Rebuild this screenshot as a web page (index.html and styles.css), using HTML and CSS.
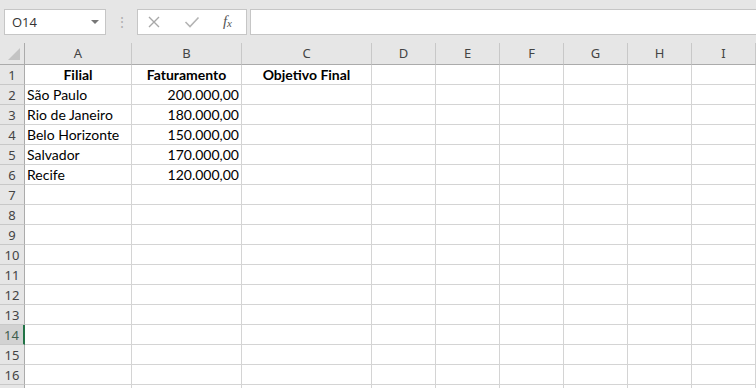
FILE: index.html
```html
<!DOCTYPE html>
<html lang="pt">
<head>
    <meta charset="UTF-8">
    <title>Planilha</title>
    <link rel="stylesheet" href="styles.css">
</head>
<body>
    <div class="topbar">
        <div class="namebox">
            <span>O14</span>
            <span class="arrow"></span>
        </div>
        <div class="dots">⋮</div>
        <div class="fxbox">
            <svg width="14" height="14" viewBox="0 0 14 14"><path d="M2 2 L12 12 M12 2 L2 12" stroke="#a8a8a8" stroke-width="1.4" fill="none"/></svg>
            <svg width="16" height="14" viewBox="0 0 16 14"><path d="M1.5 7 L6 11.5 L14.5 2.5" stroke="#b4b4b4" stroke-width="1.6" fill="none"/></svg>
            <span class="fx">f<sub>x</sub></span>
        </div>
        <div class="formula"></div>
    </div>

    <div class="sheet">
        <div class="corner"><span class="tri"></span></div>
        <div class="colhead">A</div>
        <div class="colhead">B</div>
        <div class="colhead">C</div>
        <div class="colhead">D</div>
        <div class="colhead">E</div>
        <div class="colhead">F</div>
        <div class="colhead">G</div>
        <div class="colhead">H</div>
        <div class="colhead">I</div>
    </div>
    <div class="sheet" id="rows"></div>

    <script>
        const data = [
            ["Filial", "Faturamento", "Objetivo Final"],
            ["São Paulo", "200.000,00", ""],
            ["Rio de Janeiro", "180.000,00", ""],
            ["Belo Horizonte", "150.000,00", ""],
            ["Salvador", "170.000,00", ""],
            ["Recife", "120.000,00", ""]
        ];
        const rows = document.getElementById("rows");
        // linha 17 só aparece como faixa no fundo
        for (let r = 1; r <= 17; r++) {
            const head = document.createElement("div");
            head.className = r === 14 ? "rowhead selected" : "rowhead";
            if (r < 17) head.textContent = r;
            rows.appendChild(head);
            for (let c = 0; c < 9; c++) {
                const cell = document.createElement("div");
                cell.className = "cell";
                const row = data[r - 1];
                if (row && c < 3) {
                    cell.textContent = row[c];
                    if (r === 1) cell.classList.add("title");
                    else if (c === 1) cell.classList.add("num");
                }
                rows.appendChild(cell);
            }
        }
    </script>
</body>
</html>
```

FILE: styles.css
```css
body {
    margin: 0;
    width: 756px;
    height: 388px;
    overflow: hidden;
    background: #ffffff;
    font-family: "Segoe UI", "Noto Sans", sans-serif;
}
.topbar {
    display: flex;
    align-items: flex-start;
    height: 43px;
    padding-top: 9px;
    box-sizing: border-box;
    background: #e6e6e6;
}
.namebox {
    display: flex;
    align-items: center;
    justify-content: space-between;
    box-sizing: border-box;
    width: 102px;
    height: 26px;
    margin-left: 4px;
    padding: 0 6px 0 7px;
    background: #fff;
    border: 1px solid #c6c6c6;
    font-family: "Open Sans", sans-serif;
    font-size: 13px;
    color: #333;
}
.arrow {
    width: 0;
    height: 0;
    border-left: 4px solid transparent;
    border-right: 4px solid transparent;
    border-top: 4px solid #777;
}
.dots {
    width: 31px;
    text-align: center;
    color: #b0b0b0;
    font-size: 14px;
    line-height: 26px;
}
.fxbox {
    display: flex;
    align-items: center;
    justify-content: space-between;
    box-sizing: border-box;
    width: 110px;
    height: 26px;
    padding: 0 14px 0 9px;
    background: #fff;
    border: 1px solid #c6c6c6;
}
.fx {
    font-family: "Liberation Serif", serif;
    font-style: italic;
    font-size: 15px;
    color: #555;
    line-height: 14px;
}
.fx sub {
    font-size: 11px;
    vertical-align: -1px;
}
.formula {
    flex: 1;
    height: 26px;
    margin-left: 3px;
    box-sizing: border-box;
    background: #fff;
    border: 1px solid #c6c6c6;
    border-right: none;
}
.sheet {
    display: grid;
    grid-template-columns: 25px 107px 110px 130px repeat(6, 64px);
}
.corner, .colhead {
    height: 22px;
    box-sizing: border-box;
    background: #e6e6e6;
    border-bottom: 1px solid #ababab;
}
.corner {
    position: relative;
    border-right: 1px solid #ababab;
}
.tri {
    position: absolute;
    right: 4px;
    bottom: 4px;
    width: 0;
    height: 0;
    border-left: 12px solid transparent;
    border-bottom: 12px solid #c3c3c3;
}
.colhead {
    border-right: 1px solid #c8c8c8;
    text-align: center;
    font-size: 13px;
    line-height: 21px;
    color: #444;
}
.rowhead {
    height: 20px;
    box-sizing: border-box;
    background: #e6e6e6;
    border-bottom: 1px solid #c8c8c8;
    border-right: 1px solid #ababab;
    text-align: center;
    font-size: 13px;
    line-height: 20px;
    color: #444;
}
.rowhead.selected {
    background: #d2d2d2;
    border-right: 2px solid #217346;
    color: #3f5e4d;
}
.cell {
    height: 20px;
    box-sizing: border-box;
    border-bottom: 1px solid #d4d4d4;
    border-right: 1px solid #d4d4d4;
    padding: 0 2px;
    font-family: "Lato", sans-serif;
    font-size: 14px;
    line-height: 20px;
    color: #000;
    white-space: nowrap;
    overflow: hidden;
}
.title {
    font-weight: bold;
    text-align: center;
}
.num {
    text-align: right;
}
```
